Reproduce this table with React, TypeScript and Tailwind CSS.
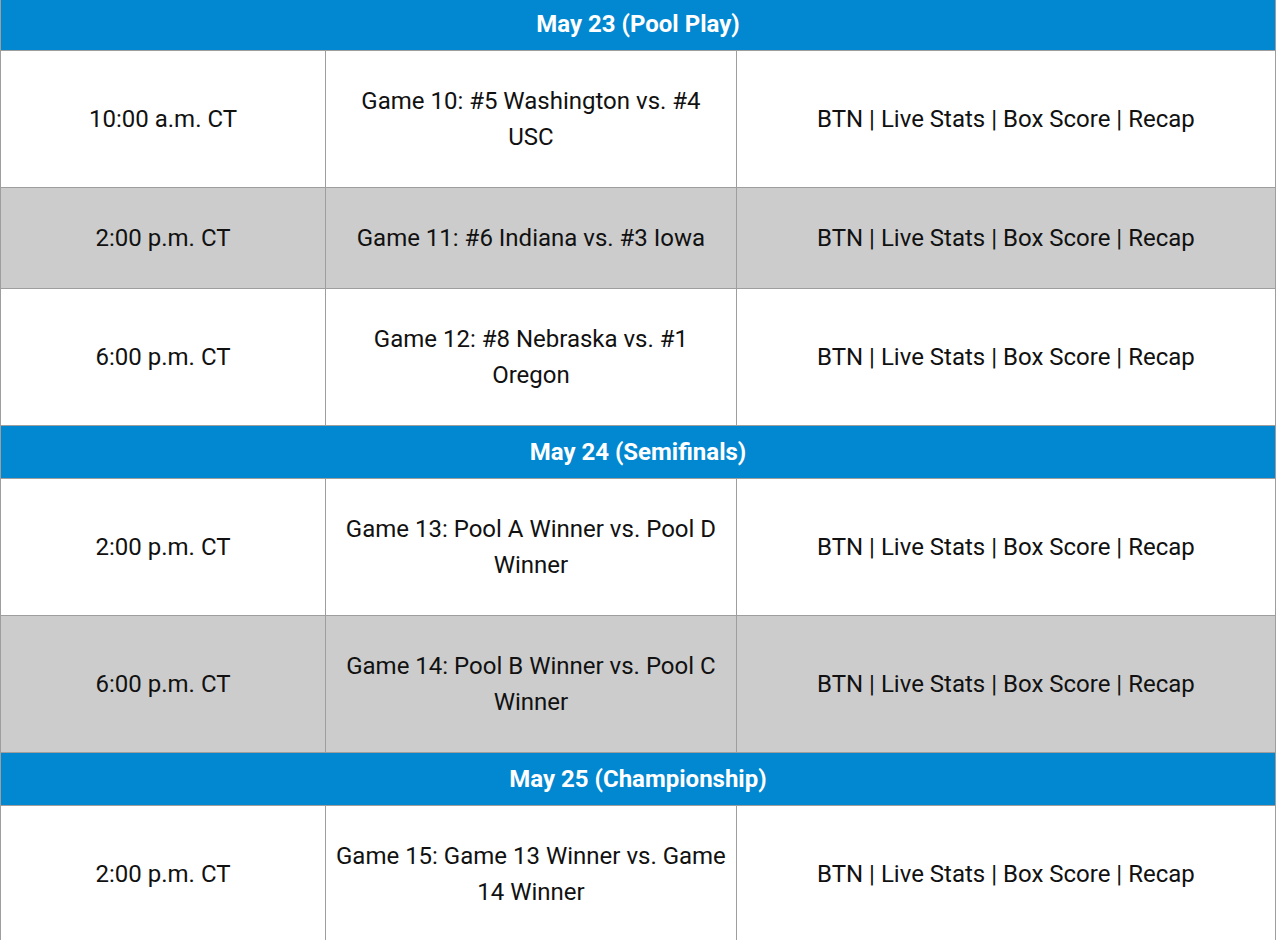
const rowsByDay = [
  {
    title: "May 23 (Pool Play)",
    games: [
      { time: "10:00 a.m. CT", game: ["Game 10: #5 Washington vs. #4", "USC"] },
      { time: "2:00 p.m. CT", game: ["Game 11: #6 Indiana vs. #3 Iowa"] },
      { time: "6:00 p.m. CT", game: ["Game 12: #8 Nebraska vs. #1", "Oregon"] },
    ],
  },
  {
    title: "May 24 (Semifinals)",
    games: [
      { time: "2:00 p.m. CT", game: ["Game 13: Pool A Winner vs. Pool D", "Winner"] },
      { time: "6:00 p.m. CT", game: ["Game 14: Pool B Winner vs. Pool C", "Winner"] },
    ],
  },
  {
    title: "May 25 (Championship)",
    games: [{ time: "2:00 p.m. CT", game: ["Game 15: Game 13 Winner vs. Game", "14 Winner"] }],
  },
];

const cellCls = "border border-[#9e9e9e] px-[10px] py-[32px] text-center align-middle whitespace-nowrap";

type Game = { time: string; game: string[] };

export default function App() {
  return (
    <div className="w-[1276px] h-[940px] overflow-hidden bg-white">
      <table
        className="-mt-[3px] w-full border-collapse text-[24px] leading-[36px] text-[#111]"
        style={{ fontFamily: "Roboto, 'Liberation Sans', sans-serif" }}
      >
        <colgroup>
          <col className="w-[325px]" />
          <col className="w-[409px]" />
          <col />
        </colgroup>
        <tbody>
          {rowsByDay.map((day) => (
            <DayBlock key={day.title} title={day.title} games={day.games} />
          ))}
        </tbody>
      </table>
    </div>
  );
}

function DayBlock({ title, games }: { title: string; games: Game[] }) {
  return (
    <>
      <tr>
        <td
          colSpan={3}
          className="border border-[#9e9e9e] bg-[#0288d1] py-[8px] text-center font-bold text-white"
        >
          {title}
        </td>
      </tr>
      {games.map((g, i) => (
        <tr key={g.game[0]} className={i % 2 === 1 ? "bg-[#cccccc]" : "bg-white"}>
          <td className={cellCls}>{g.time}</td>
          <td className={cellCls}>
            {g.game.map((line, j) => (
              <div key={j}>{line}</div>
            ))}
          </td>
          <td className={cellCls}>BTN | Live Stats | Box Score | Recap</td>
        </tr>
      ))}
    </>
  );
}
